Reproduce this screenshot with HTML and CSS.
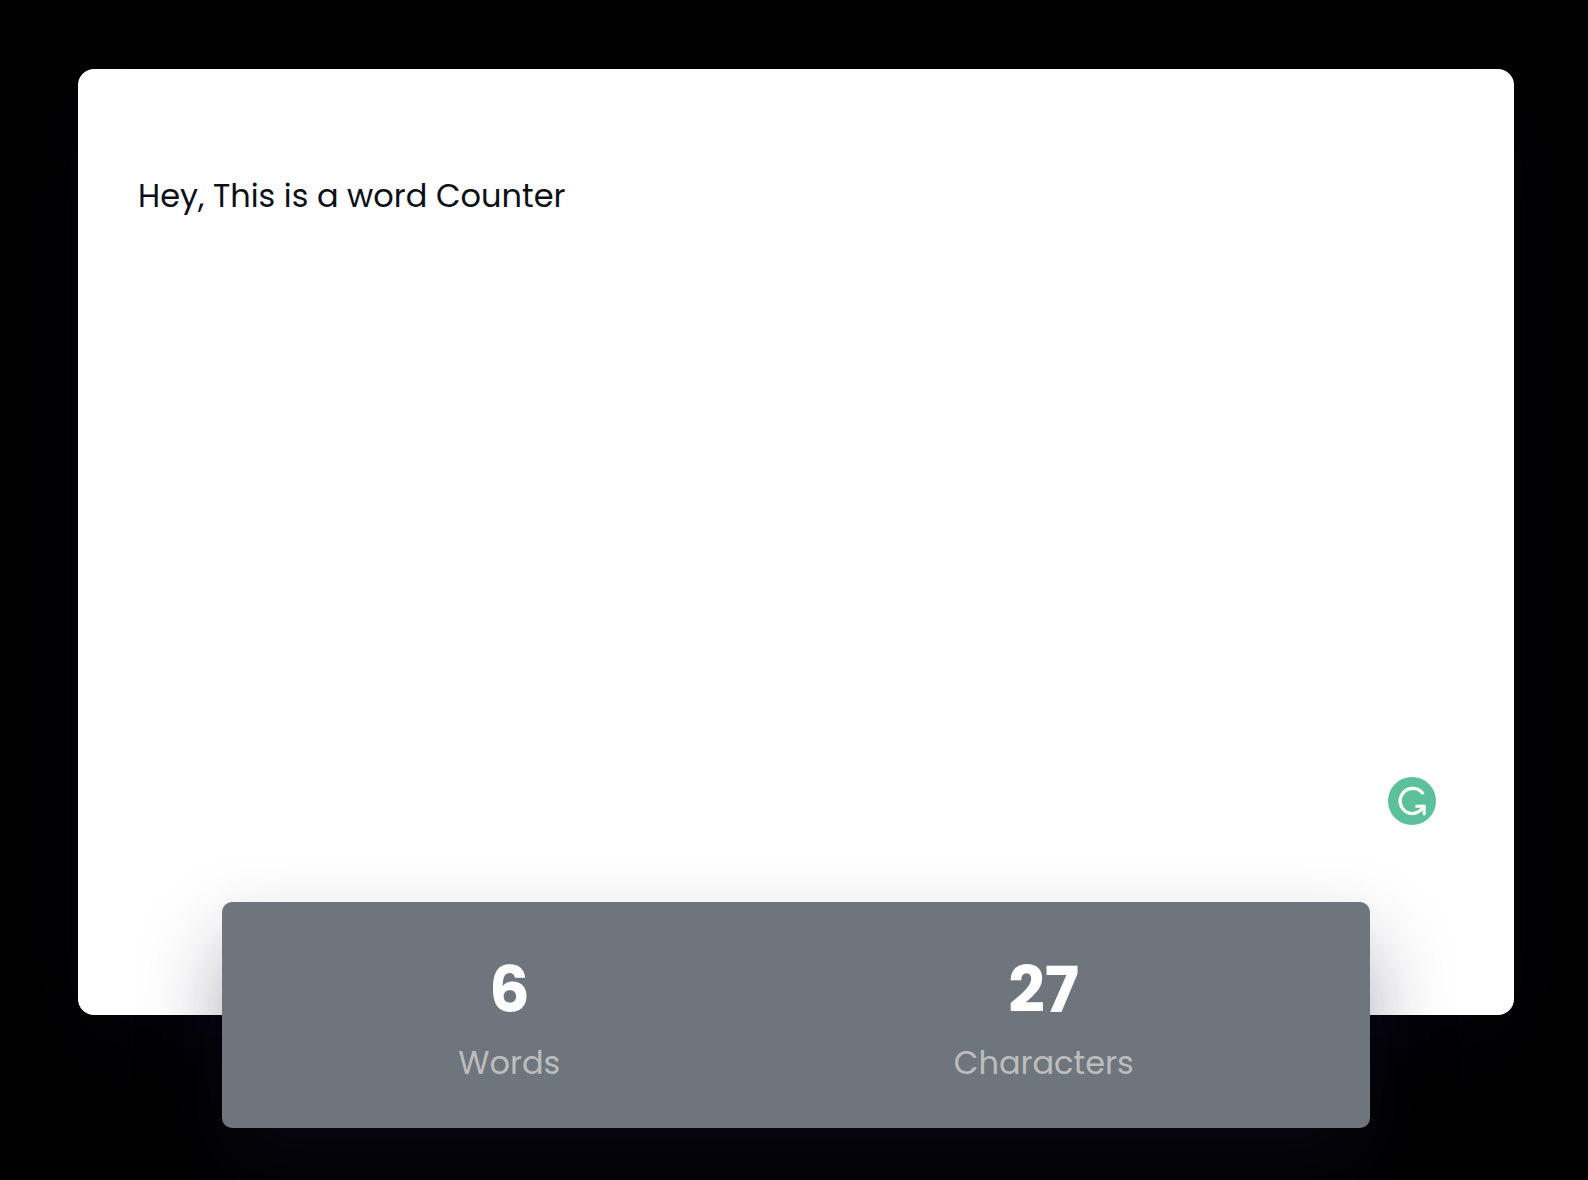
FILE: index.html
```html
<!DOCTYPE html>
<html lang="en">
<head>
<meta charset="utf-8">
<meta name="viewport" content="width=device-width, initial-scale=1">
<title>Word Counter</title>
<link rel="stylesheet" href="styles.css">
</head>
<body>
<main class="counter">
  <div class="editor">
    <textarea class="editor-input" aria-label="Your text" spellcheck="false">Hey, This is a word Counter</textarea>
    <button class="assistant" type="button" aria-label="Writing assistant">
      <svg class="assistant-icon" viewBox="0 0 48 48" fill="none" stroke="#fff" stroke-width="3.4" stroke-linecap="round" aria-hidden="true">
        <path d="M34.500 16A12.600 12.600 0 1 0 24 36.600C29 36.600 32.500 34 35.500 30"/>
        <path d="M28.500 29.200H36.200V37" stroke-width="3"/>
      </svg>
    </button>
  </div>
  <section class="stats" aria-label="Statistics">
    <div class="stat">
      <span class="stat-value">6</span>
      <span class="stat-label">Words</span>
    </div>
    <div class="stat">
      <span class="stat-value">27</span>
      <span class="stat-label">Characters</span>
    </div>
  </section>
</main>
</body>
</html>
```
FILE: styles.css
```css
* {
  box-sizing: border-box;
}

body {
  margin: 0;
  background: #000;
  color: #0d0f19;
  font-family: Poppins, Inter, "Liberation Sans", sans-serif;
}

.counter {
  min-height: 100vh;
  padding: 69px 74px 52px 78px;
  overflow: hidden;
}

.editor {
  position: relative;
  display: flex;
  height: calc(100vh - 234px);
  min-height: 400px;
  padding: 103px 60px 120px;
  background: #fff;
  border-radius: 16px;
  box-shadow: 0 32px 96px rgba(16, 14, 36, 0.3);
}

.editor-input {
  flex: 1;
  padding: 0;
  border: 0;
  outline: 0;
  resize: none;
  background: transparent;
  color: inherit;
  font: 400 32px/48px Poppins, Inter, "Liberation Sans", sans-serif;
}

.assistant {
  position: absolute;
  right: 78px;
  bottom: 190px;
  width: 48px;
  height: 48px;
  padding: 0;
  border: 0;
  border-radius: 50%;
  background: #5bc09b;
}

.assistant-icon {
  display: block;
  width: 48px;
  height: 48px;
}

.stats {
  position: relative;
  display: flex;
  justify-content: space-around;
  width: 80%;
  margin: -113px auto 0;
  padding: 40px;
  background: #6e757c;
  border-radius: 10px;
  box-shadow: 0 40px 80px rgba(22, 17, 46, 0.34);
}

.stat {
  display: flex;
  flex-direction: column;
  align-items: center;
}

.stat-value {
  color: #fff;
  font-size: 64px;
  font-weight: 700;
  line-height: 96px;
}

.stat-label {
  color: #bdbdbd;
  font-size: 32px;
  line-height: 50px;
}
```
